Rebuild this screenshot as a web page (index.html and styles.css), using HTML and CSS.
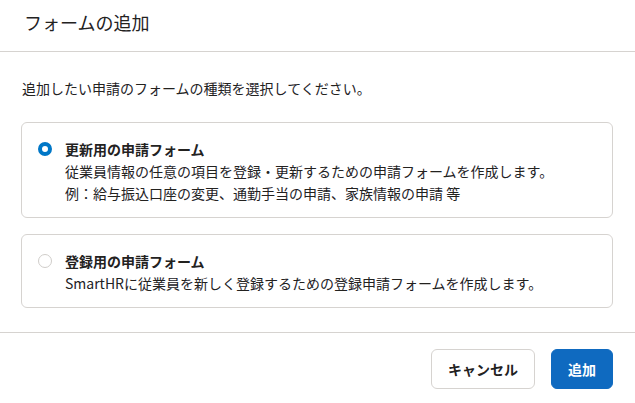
FILE: index.html
```html
<!DOCTYPE html>
<html lang="ja">
<head>
    <meta charset="UTF-8">
    <meta name="viewport" content="width=device-width, initial-scale=1.0">
    <title>フォームの追加</title>
    <link rel="stylesheet" href="styles.css">
</head>
<body>
    <div class="dialog">
        <!-- Header -->
        <div class="dialog-header">
            <h2 class="dialog-title">フォームの追加</h2>
        </div>

        <!-- Body -->
        <div class="dialog-body">
            <p class="lead">追加したい申請のフォームの種類を選択してください。</p>

            <label class="option">
                <input type="radio" name="formType" checked>
                <span class="radio"></span>
                <span class="option-text">
                    <span class="option-title">更新用の申請フォーム</span>
                    <span class="option-desc">従業員情報の任意の項目を登録・更新するための申請フォームを作成します。</span>
                    <span class="option-desc">例：給与振込口座の変更、通勤手当の申請、家族情報の申請 等</span>
                </span>
            </label>

            <label class="option">
                <input type="radio" name="formType">
                <span class="radio"></span>
                <span class="option-text">
                    <span class="option-title">登録用の申請フォーム</span>
                    <span class="option-desc">SmartHRに従業員を新しく登録するための登録申請フォームを作成します。</span>
                </span>
            </label>
        </div>

        <!-- Footer -->
        <div class="dialog-footer">
            <button class="btn btn-secondary">キャンセル</button>
            <button class="btn btn-primary">追加</button>
        </div>
    </div>
</body>
</html>
```

FILE: styles.css
```css
body {
    font-family: "Noto Sans CJK JP", "Noto Sans", sans-serif;
    margin: 0;
    padding: 0;
    background-color: #ffffff;
    color: #23221f;
}
.dialog {
    width: 635px;
}
.dialog-header {
    height: 52px;
    box-sizing: border-box;
    padding: 10px 24px 0;
    border-bottom: 1px solid #d6d3d0;
}
.dialog-title {
    margin: 0;
    font-size: 18px;
    font-weight: normal;
    line-height: 24px;
}
.dialog-body {
    padding: 25px 22px 24px 21px;
    border-bottom: 1px solid #d6d3d0;
}
.lead {
    margin: 0 0 23px 1px;
    font-size: 14px;
    line-height: 22px;
}
.option {
    display: flex;
    align-items: flex-start;
    gap: 13px;
    padding: 15px 16px 13px;
    border: 1px solid #d6d3d0;
    border-radius: 6px;
    cursor: pointer;
}
.option + .option {
    margin-top: 16px;
}
.option input {
    display: none;
}
.radio {
    flex: none;
    width: 14px;
    height: 14px;
    margin-top: 4px;
    box-sizing: border-box;
    border: 1px solid #d0cdca;
    border-radius: 50%;
    background: #ffffff;
}
.option input:checked + .radio {
    border: 4.5px solid #0077c7;
}
.option-text {
    display: flex;
    flex-direction: column;
    font-size: 14px;
    line-height: 22px;
}
.option-title {
    font-weight: bold;
}
.dialog-footer {
    display: flex;
    justify-content: flex-end;
    gap: 16px;
    padding: 16px 22px;
}
.btn {
    font-family: inherit;
    font-size: 14px;
    font-weight: bold;
    height: 40px;
    padding: 0 16px;
    border-radius: 6px;
    cursor: pointer;
}
.btn-secondary {
    width: 104px;
    background-color: #ffffff;
    color: #23221f;
    border: 1px solid #d6d3d0;
}
.btn-primary {
    width: 62px;
    background-color: #0f6ac0;
    color: #ffffff;
    border: 1px solid #0f6ac0;
}
.btn-primary:hover {
    background-color: #0b5aa5;
}
```
